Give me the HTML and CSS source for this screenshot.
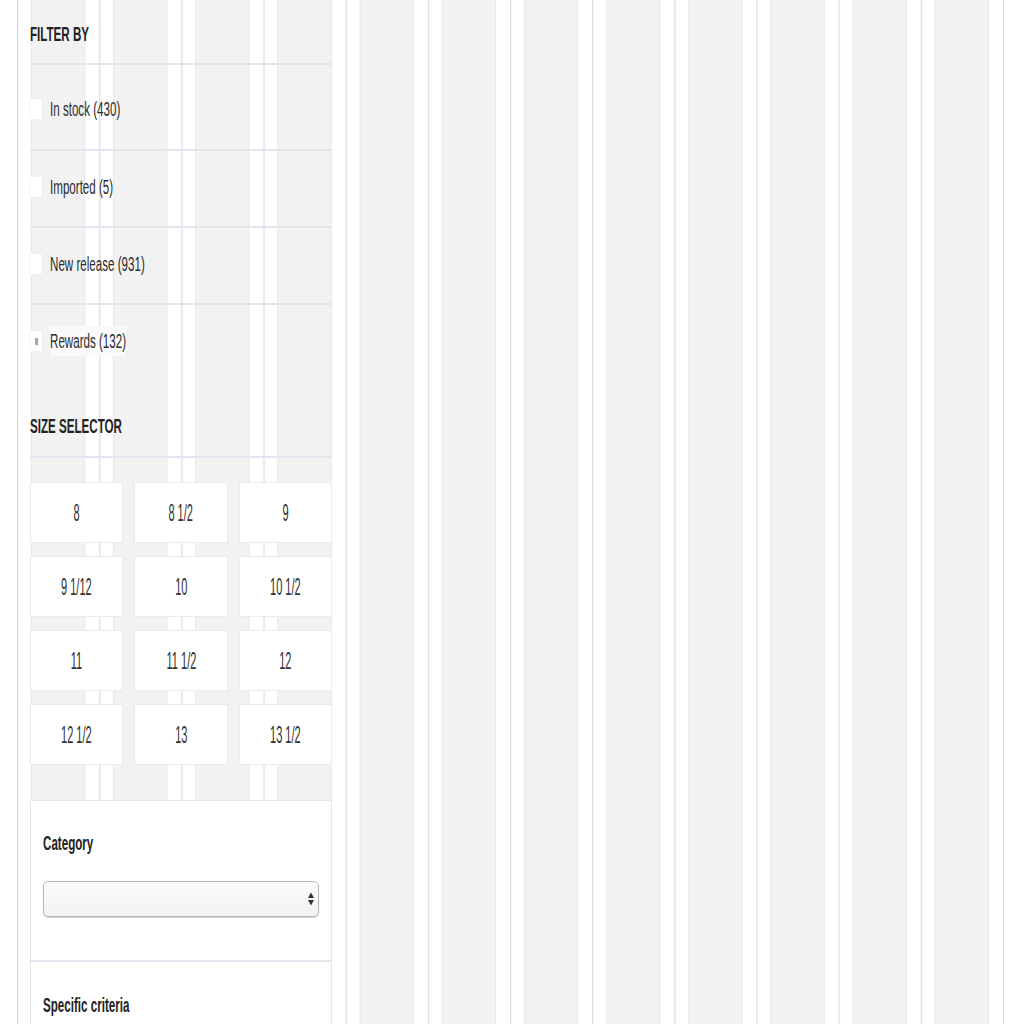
FILE: index.html
```html
<!DOCTYPE html>
<html lang="en">
<head>
<meta charset="utf-8">
<title>Filter sidebar</title>
<link rel="stylesheet" href="styles.css">
</head>
<body>
<div class="page">
  <aside class="sidebar">
    <h2 class="heading heading-filter"><span class="sx">FILTER BY</span></h2>
    <ul class="filters">
      <li class="filter filter-first"><span class="check"></span><span class="sx label">In stock (430)</span></li>
      <li class="filter"><span class="check"></span><span class="sx label">Imported (5)</span></li>
      <li class="filter"><span class="check"></span><span class="sx label">New release (931)</span></li>
      <li class="filter"><span class="check"><span class="mark"></span></span><span class="sx label label-focus">Rewards (132)</span></li>
    </ul>
    <h2 class="heading heading-size"><span class="sx">SIZE SELECTOR</span></h2>
    <div class="sizes">
      <div class="size"><span class="sx-btn">8</span></div>
      <div class="size"><span class="sx-btn">8 1/2</span></div>
      <div class="size"><span class="sx-btn">9</span></div>
      <div class="size"><span class="sx-btn">9 1/12</span></div>
      <div class="size"><span class="sx-btn">10</span></div>
      <div class="size"><span class="sx-btn">10 1/2</span></div>
      <div class="size"><span class="sx-btn">11</span></div>
      <div class="size"><span class="sx-btn">11 1/2</span></div>
      <div class="size"><span class="sx-btn">12</span></div>
      <div class="size"><span class="sx-btn">12 1/2</span></div>
      <div class="size"><span class="sx-btn">13</span></div>
      <div class="size"><span class="sx-btn">13 1/2</span></div>
    </div>
    <div class="panel">
      <section class="panel-section">
        <h3 class="panel-title"><span class="sx">Category</span></h3>
        <div class="select">
          <svg class="select-arrows" width="6" height="16" viewBox="0 0 6 16" aria-hidden="true">
            <polygon points="0,7 3,1.5 6,7" fill="#333"/>
            <polygon points="0,9 3,14.5 6,9" fill="#333"/>
          </svg>
        </div>
      </section>
      <section class="panel-section panel-section-next">
        <h3 class="panel-title"><span class="sx">Specific criteria</span></h3>
      </section>
    </div>
  </aside>
</div>
</body>
</html>
```

FILE: styles.css
```css
html, body {
  margin: 0;
  padding: 0;
  background: #ffffff;
}

body {
  font-family: "Liberation Sans", Arial, Helvetica, sans-serif;
  color: #333333;
  overflow: hidden;
}

.page {
  margin-left: 17px;
  width: 986px;
  min-height: 1024px;
  border-right: 1px solid #dcdce8;
  display: grid;
  grid-template-columns: repeat(12, 1fr);
  align-items: start;
  background-image: linear-gradient(to right,
    #d9d9e6 0, #d9d9e6 1px,
    #f1f1f6 1px, #ffffff 2px,
    #ffffff 14px,
    #e8e8eb 14px, #e8e8eb 15px,
    #f2f2f2 15px, #f2f2f2 calc(100% - 15px),
    #e8e8eb calc(100% - 15px), #e8e8eb calc(100% - 14px),
    #ffffff calc(100% - 14px), #ffffff 100%);
  background-size: calc(100% / 12) 100%;
  background-repeat: repeat-x;
}

.sidebar {
  grid-column: 1 / span 4;
  padding: 0 13.7px 0 13px;
}

.sx {
  display: inline-block;
  transform: scaleX(0.58);
  transform-origin: 0 50%;
  white-space: nowrap;
}

.heading {
  margin: 0;
  box-sizing: border-box;
  font-size: 20px;
  line-height: 24px;
  font-weight: 700;
  color: #222222;
  border-bottom: 2px solid #e4e4ef;
}

.heading-filter {
  height: 65px;
  padding-top: 22px;
}

.heading-size {
  height: 78px;
  padding-top: 34px;
}

.filters {
  list-style: none;
  margin: 0;
  padding: 0;
}

.filter {
  box-sizing: border-box;
  height: 77px;
  padding-bottom: 3px;
  border-top: 2px solid #e4e4ef;
  display: flex;
  align-items: center;
  font-size: 20px;
  line-height: 24px;
  color: #2c2c2c;
}

.filter-first {
  height: 84px;
  border-top: none;
  padding-top: 4px;
  padding-bottom: 0;
}

.check {
  width: 12px;
  height: 20px;
  margin-right: 8px;
  background: #ffffff;
  border-radius: 1px;
  box-shadow: 0 0 0 0.5px #ececec;
  display: flex;
  align-items: center;
  justify-content: center;
  flex: none;
}

.mark {
  width: 3px;
  height: 7px;
  background: #a8a8a8;
}

.label-focus {
  background: #fafafa;
  padding: 3px 0;
}

.sizes {
  margin-top: 24px;
  display: grid;
  grid-template-columns: repeat(3, 1fr);
  grid-auto-rows: 61px;
  column-gap: 11px;
  row-gap: 13px;
}

.size {
  box-sizing: border-box;
  background: #ffffff;
  border: 1px solid #ebebee;
  display: flex;
  align-items: center;
  justify-content: center;
  font-size: 24px;
  line-height: 24px;
  color: #333333;
}

.sx-btn {
  display: inline-block;
  transform: scaleX(0.46);
  transform-origin: 50% 50%;
  white-space: nowrap;
}

.panel {
  margin-top: 35px;
  background: #ffffff;
  border: 1px solid #e6e6ee;
  border-bottom: none;
}

.panel-section {
  padding: 30px 12px 43px 12px;
}

.panel-section-next {
  border-top: 2px solid #e4e4ef;
  padding-top: 31px;
  padding-bottom: 60px;
}

.panel-title {
  margin: 0;
  font-size: 20px;
  line-height: 24px;
  font-weight: 700;
  color: #222222;
}

.select {
  margin-top: 26px;
  height: 36px;
  box-sizing: border-box;
  border: 1px solid #b8b8b8;
  border-radius: 5px;
  background: linear-gradient(to bottom, #fbfbfb, #f1f1f1);
  box-shadow: 0 1px 1px rgba(0, 0, 0, 0.18);
  display: flex;
  align-items: center;
  justify-content: flex-end;
  padding-right: 4px;
}

.select-arrows {
  display: block;
}
```
